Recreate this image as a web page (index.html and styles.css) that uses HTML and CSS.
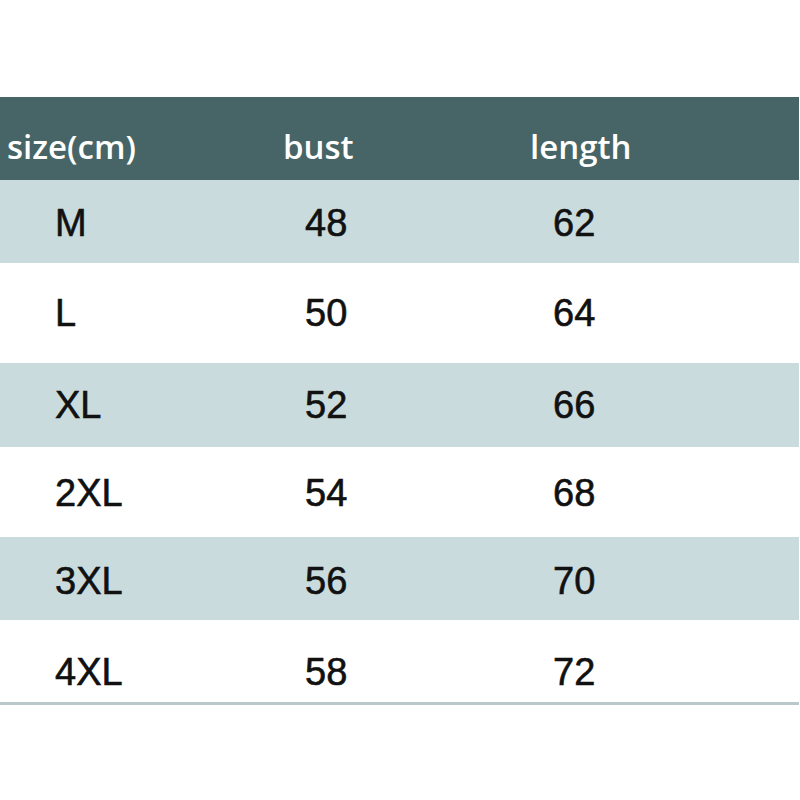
FILE: index.html
```html
<!DOCTYPE html>
<html>
<head>
<meta charset="utf-8">
<link rel="stylesheet" href="styles.css">
</head>
<body>
<div class="page">
  <div class="table">
    <div class="row head">
      <div class="cell">size(cm)</div>
      <div class="cell">bust</div>
      <div class="cell">length</div>
    </div>
    <div class="row body shade"><div class="cell">M</div><div class="cell">48</div><div class="cell">62</div></div>
    <div class="row body"><div class="cell">L</div><div class="cell">50</div><div class="cell">64</div></div>
    <div class="row body shade"><div class="cell">XL</div><div class="cell">52</div><div class="cell">66</div></div>
    <div class="row body"><div class="cell">2XL</div><div class="cell">54</div><div class="cell">68</div></div>
    <div class="row body shade"><div class="cell">3XL</div><div class="cell">56</div><div class="cell">70</div></div>
    <div class="row body last"><div class="cell">4XL</div><div class="cell">58</div><div class="cell">72</div></div>
  </div>
</div>
</body>
</html>
```
FILE: styles.css
```css
html, body {
  margin: 0;
  padding: 0;
  background: #ffffff;
}
.page {
  width: 800px;
  height: 800px;
  padding-top: 97px;
  box-sizing: border-box;
}
.table {
  width: 799px;
  display: flex;
  flex-direction: column;
  border-bottom: 3px solid #b8c8cb;
}
.row {
  display: grid;
  grid-template-columns: 305px 248px 1fr;
  align-items: center;
  box-sizing: border-box;
}
.head {
  height: 83px;
  background: #476566;
  color: #ffffff;
  font-family: "Comic Sans MS", "Open Sans", "DejaVu Sans", sans-serif;
  font-weight: 600;
  font-size: 33px;
  grid-template-columns: 283px 247px 1fr;
  padding-top: 15px;
}
.head .cell:first-child {
  padding-left: 7px;
}
.body {
  font-family: "Liberation Sans", Arial, sans-serif;
  font-size: 38px;
  color: #111111;
  -webkit-text-stroke: 0.6px #111111;
  height: 84px;
}
.body .cell:first-child {
  padding-left: 55px;
}
.shade {
  background: #c9dbdd;
}
.row.body:nth-child(2) { height: 83px; padding-top: 3px; }
.row.body:nth-child(3) { height: 100px; }
.row.body:nth-child(4) { height: 84px; }
.row.body:nth-child(5) { height: 90px; padding-top: 2px; }
.row.body:nth-child(6) { height: 83px; padding-top: 6px; }
.row.body:nth-child(7) { height: 82px; padding-top: 22px; }
```
